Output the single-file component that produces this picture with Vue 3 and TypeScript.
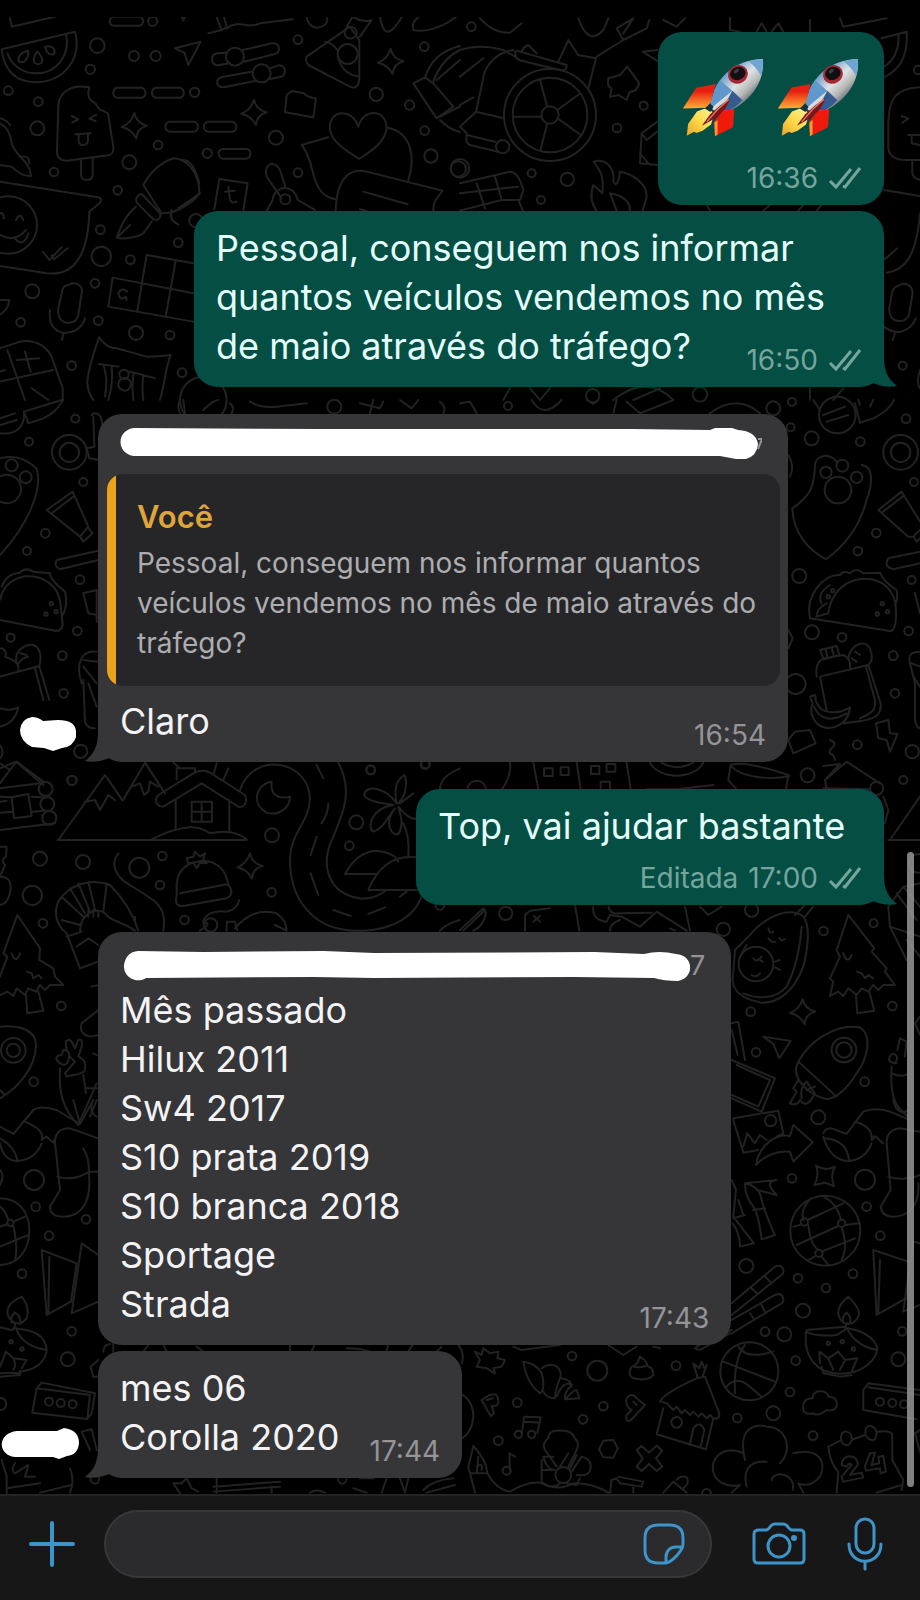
<script setup lang="ts">
interface Message {
  id: number
  from: 'me' | 'them'
  kind?: 'emoji' | 'quoted' | 'stacked' | 'named'
  lines: string[]
  time: string
  edited?: boolean
  tail?: boolean
  spaced?: boolean
  wide?: boolean
}

interface Tile {
  x: number
  y: number
  dots: number[][]
  sparks: number[][]
  paths: string[]
}

const messages: Message[] = [
  { id: 1, from: 'me', kind: 'emoji', lines: [], time: '16:36' },
  {
    id: 2, from: 'me', time: '16:50', tail: true, wide: true,
    lines: ['Pessoal, conseguem nos informar', 'quantos veículos vendemos no mês', 'de maio através do tráfego?'],
  },
  { id: 3, from: 'them', kind: 'quoted', lines: ['Claro'], time: '16:54', tail: true, spaced: true, wide: true },
  { id: 4, from: 'me', kind: 'stacked', lines: ['Top, vai ajudar bastante'], time: '17:00', edited: true, tail: true, spaced: true },
  {
    id: 5, from: 'them', kind: 'named', time: '17:43', spaced: true,
    lines: ['Mês passado', 'Hilux 2011', 'Sw4 2017', 'S10 prata 2019', 'S10 branca 2018', 'Sportage', 'Strada'],
  },
  { id: 6, from: 'them', lines: ['mes 06', 'Corolla 2020'], time: '17:44', tail: true },
]

const spark = 'M0-38Q6-8 38 0Q8 8 6 38Q-8 10-38 4Q-8-8 0-38Z'

// Wallpaper doodles, grouped in tiles drawn at three units per pixel.
const tiles: Tile[] = [
  {
    x: 0, y: 0,
    dots: [[292, 137, 22], [402, 168, 15], [467, 168, 15], [271, 208, 14], [25, 272, 13], [115, 305, 13], [112, 385, 21], [458, 64, 14], [584, 277, 14], [474, 435, 13], [388, 487, 21], [622, 460, 14], [162, 516, 13], [353, 571, 13], [301, 689, 13], [304, 769, 29], [391, 779, 13], [535, 728, 13], [588, 662, 20], [285, 850, 13], [97, 874, 21], [295, 962, 13], [62, 967, 13], [408, 999, 21], [510, 1005, 13], [215, 1097, 13], [546, 1118, 13], [894, 119, 13], [1273, 140, 13], [1129, 283, 20], [1229, 315, 14], [1274, 392, 13], [828, 413, 21], [1293, 468, 20], [894, 518, 13], [856, 598, 15], [1375, 507, 23], [705, 170, 27], [785, 220, 27], [1052, 98, 18], [1043, 162, 30], [25, 675, 86], [372, 1123, 14], [374, 1153, 19], [610, 1200, 70]],
    sparks: [[403, 377], [762, 337], [1172, 184]],
    paths: [
      'M30 55L35 80L165 50', 'M5 148L225 95C245 170 200 240 115 247C65 248 15 230 5 148M198 102C212 165 170 222 105 220C65 218 35 195 22 160',
      'M56 185C52 170 65 155 85 152C86 175 75 192 56 185M112 155C132 175 130 190 115 193C97 192 98 172 112 155M135 140C160 135 168 150 162 162C148 168 138 155 135 140',
      'M268 262C262 280 265 298 280 306C295 312 290 330 308 332L324 340L340 440C342 460 335 464 325 466L200 482C180 482 170 470 171 455L175 320C175 280 210 250 268 262M243 480V525C245 545 275 545 278 525V475',
      'M215 348L235 358L217 368M288 345L268 356L287 363M226 403L272 400M236 405V425C240 440 262 438 264 422V402',
      'M340 50H420C435 58 430 76 418 77H340C326 75 326 55 340 50M352 263H425C440 268 440 290 425 293H352C336 290 336 267 352 263M468 263H540C555 268 555 290 540 293H468C452 290 452 267 468 263M508 365H582C598 370 598 392 582 395H508C492 390 492 370 508 365M624 365H697C713 370 713 392 697 395H624C608 390 608 370 624 365M668 447H740C755 450 755 473 740 476H668C652 472 652 450 668 447',
      'M525 145L602 125L565 195L553 158ZM545 50L550 62L556 50',
      'M680 158L650 160C630 165 632 195 655 196L690 190M728 150L815 130C840 128 845 155 825 162L732 185M755 215L670 230C645 235 645 262 672 262L765 243M810 205L835 196C855 194 862 220 845 230L806 238',
      'M625 100L665 90L650 52M668 88L680 82L672 50M680 85C720 55 740 90 780 70L878 58M920 52C930 100 985 85 982 55M1140 50C1150 110 1170 110 1205 52M1240 90C1230 60 1270 40 1275 45M1240 90C1290 100 1350 70 1380 40',
      'M920 170L1050 80L1078 120V240C1075 265 1060 265 1050 260L925 195Q915 185 920 170M975 125Q1000 130 1012 150M1015 175Q1030 225 1078 230M1040 80L1058 50M1080 110L1115 60M1058 50Q1090 70 1115 60',
      'M860 285L875 273L912 280Q918 290 948 296L940 352L855 337Z',
      'M1075 380C1055 320 985 330 990 388C995 425 1035 450 1077 477C1120 450 1160 420 1160 380C1155 325 1090 325 1075 380',
      'M985 412L905 435C925 460 932 490 942 530C955 575 980 595 1005 597M1165 383C1240 400 1245 480 1225 540M1007 635C1010 520 1060 505 1100 515L1327 572C1310 600 1300 600 1300 632M1090 575L1223 613M1080 628L1100 633',
      'M1240 250L1275 232L1300 250L1360 320L1310 355ZM1275 235C1290 180 1330 150 1380 138M1300 245C1320 190 1350 165 1380 150M1310 240L1380 180M1320 350L1380 320M1320 360Q1350 390 1380 396',
      'M0 370Q30 385 35 430C45 470 90 480 93 528Q65 530 35 500L0 495M60 470Q90 465 88 490M0 355Q20 360 30 375',
      'M0 545L285 590Q310 592 300 608L268 635C265 760 225 830 140 820L0 798M0 640Q10 635 12 655M48 660Q60 635 70 660M0 705Q45 730 78 690M45 715Q70 745 85 700M128 755L148 780L185 742M155 765L162 778L203 745',
      'M430 555C455 510 490 485 520 475C560 475 600 520 598 580C590 600 540 630 515 637L485 640ZM545 480Q580 475 598 550M600 580L535 625M515 630Q505 660 535 673M425 582C410 585 405 600 410 608L460 658C475 665 485 650 480 640ZM408 620C370 650 360 690 350 712C370 722 420 708 430 700L455 665M352 712L390 675',
      'M658 537L743 550L730 630M658 537L643 628M685 560L690 600Q695 612 710 605M675 575L705 572',
      'M800 530C790 495 820 475 840 510L856 560M800 530L845 595M818 600C820 560 880 545 893 600L945 630M818 600L800 632',
      'M440 765L580 790M440 765L412 932M527 782L498 945M338 833L580 880M338 833L325 920L580 965M355 880Q365 860 382 875M355 880Q360 905 378 890L380 900',
      'M205 855C225 842 250 855 245 880L235 945C230 965 215 970 200 968C180 965 172 945 175 925L187 870Q190 858 205 855M150 930C145 975 165 995 190 998C225 1000 245 985 255 955M190 1000L186 1020M0 900L28 900Q25 930 0 943',
      'M0 1045L60 1025C110 1015 150 1045 160 1085L188 1165V1200M22 1050L75 1200M0 1145L160 1110M50 1080L118 1075M75 1055L92 1115M95 1165L145 1200M0 1115L15 1110',
      'M262 1150C262 1110 285 1050 297 1012C310 1030 330 1045 350 1045L440 1070Q480 1070 512 1065C495 1110 495 1150 480 1200M262 1150Q265 1180 280 1200M297 1092L355 1100M390 1115L465 1135M310 1095Q325 1130 315 1190M335 1100Q340 1150 325 1200M400 1120Q395 1160 400 1200M430 1125Q425 1165 430 1200',
    ],
  },
  {
    x: 460, y: 0,
    dots: [[34, 80, 13], [551, 317, 12], [471, 384, 13], [322, 538, 20], [215, 520, 12], [243, 600, 12], [0, 505, 28], [1328, 1097, 12], [1375, 210, 13], [720, 1183, 22], [398, 1187, 20], [270, 345, 138], [270, 345, 112], [270, 345, 26], [128, 440, 20]],
    sparks: [],
    paths: [
      'M262 320L240 240M292 330L358 282M293 355L362 405M262 370L242 448M243 350L160 350',
      'M60 55Q100 100 150 98L185 70M355 55Q385 140 430 90L445 55M0 150Q60 130 130 150L165 170M165 155Q165 180 185 182L300 210Q320 215 320 195L190 158Q170 150 165 155M185 155Q190 140 205 135L230 160M295 185L325 120L355 165L408 175L385 265M410 170L490 120L560 85L568 60M490 120L470 85L520 55L490 100',
      'M160 150C90 160 70 220 70 235L48 335L132 355M48 335L0 380L20 400M20 405Q15 430 30 435L112 455M20 405L105 425M0 315L40 292M0 230L70 175',
      'M445 235L480 225L502 200L538 250Q530 275 510 275L500 300L475 285L450 290L455 265Q440 260 445 235',
      'M548 155L592 150M548 155L595 185M592 365L545 400L540 490L592 495M545 400L560 420L592 395M540 460L565 490',
      'M400 485C435 475 465 500 460 545C465 555 475 560 480 515C510 520 560 545 560 590L548 632M400 485C430 520 430 540 427 580L400 555Q385 600 410 632M470 632L450 580C500 590 510 610 510 632',
      'M0 550L150 515Q175 515 190 570L180 600L125 600L0 632M50 550L75 625M105 530L125 600M0 580L175 560M175 600L188 632',
      'M610 60L650 80L675 55M810 50V90L840 95M890 95L905 70L920 95M935 95L955 70L970 95M1050 60V95M1140 55L1150 80L1280 55M1265 115L1340 95C1345 165 1320 210 1272 232M1315 105C1320 145 1300 185 1272 200',
      'M1380 262C1310 265 1285 290 1285 380V440C1285 470 1310 480 1340 480H1380M1325 348L1345 356L1327 368M1345 405H1380M1355 405V430L1380 435M1357 480V520Q1360 535 1380 540M1272 570L1380 588M1380 640C1370 760 1340 810 1280 818M1272 780L1312 745',
      'M1320 855C1340 845 1362 860 1357 885L1347 945C1340 970 1285 975 1288 925L1297 875Q1302 860 1320 855M1272 980C1310 1010 1350 995 1368 955M1305 1000L1298 1020M1380 1110Q1368 1150 1380 1165',
      'M740 615L750 632M910 632L930 615M1015 632L1030 615M1070 632L1085 615M130 1200L150 1165M210 1165L240 1200L270 1165M460 1200Q560 1120 640 1200M520 1200L600 1165M1050 1165V1200M1120 1200L1150 1165',
    ],
  },
  {
    x: 0, y: 400,
    dots: [[226, 56, 12], [87, 125, 12], [208, 157, 52], [208, 157, 29], [250, 246, 12], [35, 196, 18], [77, 232, 18], [20, 267, 43], [136, 400, 13], [81, 453, 12], [240, 539, 13], [232, 693, 13], [32, 713, 12], [187, 767, 13], [191, 880, 13], [216, 1141, 14], [242, 1054, 20], [1112, 1109, 13], [154, 611, 5], [168, 635, 5], [138, 642, 5], [1003, 20, 21], [1275, 1094, 13]],
    sparks: [],
    paths: [
      'M0 100C50 105 75 80 72 35L185 0M72 35L85 70L130 55C170 35 175 20 190 0M0 55L45 40M0 75L50 60M275 45C285 35 300 40 305 60L310 95M280 50L283 140L260 145L268 175L295 180',
      'M0 175C60 160 90 190 110 205C130 270 80 380 0 465', 'M140 330L218 275L265 380L240 410ZM155 340L220 290M240 410L250 425L278 400L265 385M170 480L295 452M170 480Q160 500 180 508L295 480M250 580L290 570M250 580L265 640L290 645M290 570V665',
      'M0 600C20 500 160 510 180 600L188 675Q185 695 165 692L0 660M5 560Q20 520 60 518Q75 500 100 515L150 520Q150 540 195 575Q205 620 185 650',
      'M50 790C40 750 80 730 100 735C125 745 125 770 118 800L148 900M0 830L118 798M105 805L130 900M55 790Q70 770 85 770M60 760L80 765M0 745C20 745 20 770 15 770C40 780 60 790 55 810M0 925Q30 935 55 922Q45 970 0 980',
      'M245 850C225 790 245 750 290 755M250 840L255 965Q260 985 285 985M250 780L292 785M250 800L290 850M265 850L290 920',
      'M0 1035Q15 1060 0 1075M0 1090L30 1110L50 1085L130 1145M30 1110L0 1150M540 40Q530 20 540 0M555 40L550 0M610 30Q640 0 655 0M690 10Q705 20 695 40M750 5Q780 25 830 20L920 10M1080 10L1140 25L1150 5M1110 40L1120 0M1200 0L1235 25L1255 0M1320 5Q1340 20 1330 40',
    ],
  },
  {
    x: 460, y: 400,
    dots: [[144, 18, 12], [940, 25, 21], [996, 5, 12], [992, 82, 12], [1055, 115, 21], [1338, 56, 13], [1201, 125, 13], [1322, 157, 52], [1322, 157, 29], [1362, 246, 12], [1098, 217, 17], [1147, 197, 18], [1190, 232, 17], [1134, 270, 40], [1132, 45, 55], [1249, 399, 13], [1194, 453, 13], [1018, 528, 21], [1355, 540, 12], [1056, 697, 21], [1146, 712, 13], [1346, 693, 13], [1300, 767, 13], [1007, 852, 30], [1305, 880, 13], [1192, 1034, 13], [1357, 1055, 20], [1267, 611, 5], [1283, 635, 5], [1252, 642, 5], [1105, 590, 5], [1118, 572, 5]],
    sparks: [],
    paths: [
      'M0 10L30 5L50 40M215 0Q250 60 305 0M380 0L400 12L415 0M460 40L470 0M500 5L540 40L640 0M750 40Q830 -20 900 40M1060 0L1080 30M1185 10L1200 68L1240 55Q1290 30 1302 0M1195 0L1200 15M1230 20L1240 0M1090 45L1155 20M1100 65L1165 45M985 165Q1005 200 990 230',
      'M1065 205C1060 165 1110 155 1130 185M1205 195C1245 200 1235 260 1220 300C1200 380 1150 440 1098 478C1045 450 1000 400 997 325C1055 285 1060 260 1065 205',
      'M1255 330L1325 275L1380 365M1265 338L1328 290M1255 330L1345 410H1360L1380 390M1362 410L1370 425L1380 415M1380 455L1285 475Q1270 500 1300 508L1380 490M1365 580L1380 640',
      'M1050 655C1035 590 1090 520 1140 525M1140 525Q1150 510 1170 520Q1190 500 1210 520L1260 518Q1270 545 1310 570Q1315 600 1305 615M1050 655L1290 693C1315 695 1312 600 1295 580C1260 510 1120 520 1105 640L1070 650Q1070 625 1100 610M1085 610Q1070 580 1110 555',
      'M1080 830L1225 795L1262 910C1265 945 1245 955 1210 962L1150 970M1080 830L1100 930M1218 800L1245 900C1250 930 1235 940 1200 955M1070 830C1065 790 1080 780 1095 775L1150 765C1170 775 1172 790 1170 805M1080 750L1130 738L1138 765L1092 778ZM1097 748L1103 773M1115 743L1122 768M1165 775C1175 720 1240 710 1235 780L1225 798M1175 775L1190 785M1185 755L1200 765',
      'M1050 890L1065 885L1068 905C1085 950 1140 940 1170 922C1165 980 1100 1000 1070 970Q1045 940 1058 910ZM1062 920Q1090 980 1160 940',
      'M1380 755Q1340 755 1350 790L1365 850V960Q1370 985 1380 985M1355 790L1380 800M1360 830L1380 860',
      'M985 1020L1005 995L1050 990L1067 1030L1000 1060ZM1110 1020Q1135 1030 1115 1045Q1100 1060 1120 1065L1125 1080M1248 970L1285 960L1290 1000L1313 1002L1290 1055L1280 1020L1255 1015Z',
      'M985 690L998 715L985 745',
    ],
  },
  {
    x: 0, y: 740,
    dots: [[216, 121, 14], [137, 147, 21], [142, 192, 21], [148, 234, 21], [1112, 90, 13], [1277, 72, 13], [1069, 247, 21], [816, 286, 21], [1048, 317, 13], [120, 356, 21], [249, 366, 21], [418, 383, 30], [487, 348, 13], [480, 435, 13], [97, 466, 29], [815, 457, 13], [554, 540, 13], [129, 550, 13], [184, 798, 13], [40, 931, 37], [40, 931, 20], [101, 1025, 13], [632, 555, 20], [1320, 495, 14]],
    sparks: [[750, 378]],
    paths: [
      'M0 85L48 65L130 135M0 145L120 130M0 170L35 172M0 270L165 250M35 172L85 162L95 228L42 235ZM95 170L125 172M97 215L130 212M0 185L20 182M0 218L38 215',
      'M175 300L315 105L368 182L435 68L495 160M255 185L285 180L300 210L325 165L345 180M395 140L420 130L432 165L445 155L450 125L475 140M172 300H740M455 298Q520 265 570 262Q600 260 630 280Q700 265 740 298',
      'M475 165L580 100Q605 85 630 98L735 165C745 190 730 205 715 200L605 130L490 200C470 200 460 180 475 165M527 180V265M688 180V275M575 185H636V245H575ZM605 185V245M575 215H636M530 118V85H585V98M520 68L540 85M640 105L650 70M670 120L685 85',
      'M720 150C760 30 930 60 930 180C925 250 870 280 870 360C870 480 940 560 1040 570C1120 580 1230 560 1265 470M1015 68C1060 150 1030 220 1000 290C960 370 980 460 1080 475Q1120 480 1160 450M950 75L970 115M985 190Q985 220 965 250M950 290L932 345M932 400L955 465M1000 510L1052 528M1105 522L1155 502M1200 470L1220 455',
      'M815 125C770 130 750 190 800 218C840 230 870 200 870 170C830 180 810 160 815 125',
      'M1190 190C1160 145 1100 130 1092 165C1100 185 1150 190 1180 195C1110 205 1100 270 1122 275C1150 265 1165 230 1185 205C1150 250 1175 290 1195 282C1215 250 1200 225 1195 200C1220 230 1240 240 1248 235M1195 190C1225 160 1220 110 1212 105C1180 130 1185 160 1190 190M1200 190L1240 160M1210 250Q1230 290 1225 350',
      'M1035 402Q1080 320 1150 335Q1190 345 1195 365M1035 402H1130M1105 450Q1150 340 1250 352M1105 450H1250M1320 148Q1320 110 1380 85',
      'M0 320L20 320L18 350Q0 360 15 375L0 410Q40 410 30 460Q20 495 0 495M355 340C330 370 345 410 390 435L460 480C495 510 495 540 490 572',
      'M530 465V430C535 390 560 365 610 362C660 365 680 400 685 435M530 465C525 490 530 500 550 498L680 475Q700 465 692 445Q685 430 670 435L540 460M560 355L580 350L585 335L600 350L615 340L610 358L620 370L600 368L590 385L580 368L565 370Z',
      'M240 685L200 580C160 550 160 500 185 470C230 420 290 420 330 435C365 470 395 510 415 572M240 685L295 665M230 620L265 595L295 615M240 575C240 520 290 500 315 520C330 545 370 545 405 572M185 470L250 530M210 445L255 520M235 430L270 515M265 425L285 510M320 430L310 515M265 510V530M280 510V530M295 512V530M185 540L240 555M200 590L245 575M405 530V545',
      'M600 572Q640 545 610 550C610 520 650 510 680 515Q710 510 718 480M680 572V545H705L712 570M705 565Q760 500 830 520Q860 540 860 572L825 555M1320 572Q1340 550 1380 540',
      'M52 525L120 625L118 660L160 685L165 710L190 735L150 735L135 750L120 735L108 755L85 745L75 765L50 745L40 768L22 755L0 765M52 525L10 640L22 650L0 710M35 640Q48 675 60 640M80 695L95 700L100 715L115 705L125 715M78 765L82 820L130 812L115 755',
      'M0 860C60 855 110 870 108 920C105 980 60 1040 0 1075M0 1050L15 1065M295 810L245 850Q235 880 270 890L295 885M275 740L295 735M280 940L290 945',
      'M180 970C165 960 165 945 185 945L190 930Q215 930 205 960C200 980 185 975 180 970M200 930L197 905Q210 890 220 915L225 925L235 900Q250 895 245 920L235 950Q260 960 255 985M210 950L225 965L195 1000L200 1010C210 1005 250 1005 255 990M180 985C175 1060 190 1110 235 1155L290 1030M250 1005L258 1060M258 1045H290M275 1090Q270 1120 290 1130',
    ],
  },
  {
    x: 460, y: 740,
    dots: [[1043, 106, 21], [1330, 120, 12], [1250, 145, 20], [137, 520, 20], [790, 568, 20], [875, 510, 20], [1091, 573, 13], [1241, 550, 12], [872, 815, 13], [1297, 798, 13], [888, 937, 13], [1152, 930, 37], [1152, 930, 23], [1214, 1025, 13], [888, 672, 52], [50, 150, 28], [1375, 370, 28]],
    sparks: [[1028, 815]],
    paths: [
      'M150 68Q155 110 125 148M220 68L235 148M350 68L362 148M500 68L512 148M252 85H278V108H252ZM302 82H326V105H302ZM393 78H418V102H393ZM440 72H466V95H440ZM422 148V125H450V148M570 68C600 120 700 120 730 68M605 68Q650 95 700 68M560 148H650L760 135M805 120L812 75Q850 60 985 105L978 148M812 75C840 115 940 120 988 108M805 120L830 148',
      'M1090 78L1140 72L1095 120L1100 145M1095 120L1160 65L1260 130M1090 145L1230 148M1290 300L1380 170M1285 300H1380M1270 170L1285 210L1275 250',
      'M0 570L70 505L78 520Q70 560 40 572M10 572L75 510M195 572V525L210 512L270 505M222 528L240 545M240 528L220 545M345 495L358 572M400 500Q395 540 440 545L450 525L485 530L540 560L590 515L680 572M450 572Q450 550 480 540M675 500L690 572M445 500Q450 525 480 520L575 518M720 500L745 525L785 500M630 565L645 572',
      'M870 585C920 525 990 500 1030 530C1055 560 1040 640 1030 680C1000 760 950 790 905 788C860 780 820 760 818 720L825 630ZM1035 530L1060 500M1005 525L1040 490M1025 560C1020 640 1000 700 980 740C950 775 900 780 850 760M860 615L845 640M945 665L960 660M940 680L960 690M880 655Q890 670 905 650M900 660L908 665M875 705Q890 715 900 700M925 565Q930 585 940 575M958 595Q965 605 975 597M925 595Q935 610 945 605',
      'M1165 525L1243 625L1235 635L1280 685L1275 695L1305 735L1270 735L1255 750L1240 735L1225 755L1205 745L1190 765L1165 745L1150 768L1135 755L1110 768L1120 725L1110 715L1140 650L1130 630ZM1150 640Q1162 675 1175 645M1190 695L1205 700L1215 715L1225 705L1240 715M1188 765L1192 820L1243 812L1228 755',
      'M1380 430L1330 440L1285 500L1290 560L1340 660M1310 460L1370 540M1330 440L1380 500M1290 560L1380 590M1340 600L1380 650M815 850L835 845L855 960M815 870L833 945',
      'M910 890L992 903L958 955L940 912Z',
      'M1015 965C1050 900 1130 850 1200 862C1240 890 1220 960 1190 1000C1160 1050 1120 1085 1090 1075C1040 1060 990 1010 1015 965M1015 965L1130 1070M1015 1020L1000 1045L1010 1055L990 1090Q1010 1100 1020 1080Q1040 1110 1065 1060L1040 1025Q1020 1040 1025 1075M1040 1050L1065 1040',
      'M815 960L945 1015L905 1115L815 1075M830 975L930 1020L895 1100L815 1065',
      'M1310 970C1285 970 1280 955 1300 940Q1320 950 1305 970M1312 930L1320 895L1340 905L1335 950M1295 980C1290 1060 1300 1100 1345 1130M1295 1000Q1330 1015 1345 1000',
      'M1380 830L1365 850L1380 885',
    ],
  },
  {
    x: 0, y: 1100,
    dots: [[102, 240, 30], [107, 320, 13], [258, 358, 13], [147, 407, 13], [66, 521, 13], [215, 694, 13], [203, 778, 21], [0, 912, 19], [147, 905, 12], [182, 909, 12], [218, 913, 12], [285, 1138, 13], [1027, 1138, 13], [33, 725, 5], [66, 747, 5], [31, 369, 10]],
    sparks: [],
    paths: [
      'M0 80L40 102L100 30Q120 15 170 30L240 72L280 0M75 65Q135 90 125 120L140 110L160 128L165 115M0 130Q10 180 50 183Q105 180 125 130M0 115Q45 140 52 180M240 72L220 0M270 50L290 0M165 128Q165 85 210 85L295 115M165 128L180 270L150 320Q150 350 190 350C250 350 270 300 268 240C265 200 270 180 250 145M172 230Q220 245 268 215L295 215',
      'M0 295C50 295 88 330 88 390C88 450 55 495 0 495M0 320Q15 330 25 360M40 365L75 350M0 380L25 372M40 380Q55 440 45 480M0 440L85 405M0 210Q15 225 0 255',
      'M125 450L230 490L213 605L140 645L125 450M148 470L145 640M245 430L295 465M245 430L215 640L295 605',
      'M65 590Q90 620 80 655Q60 680 38 665C10 640 20 610 65 590M45 638Q65 650 60 672M45 638Q30 650 35 668M0 682L35 690Q45 690 45 670M45 685C90 690 140 700 140 755C130 800 90 820 0 820M50 690Q70 740 140 750M0 800L18 755L40 775L80 780L65 805M0 830L60 825V812M40 775Q50 795 40 810',
      'M110 865L125 848L285 880L275 940L262 957L97 938ZM110 865L270 885L262 957M295 780L272 800L280 830L295 830M245 995L275 988L290 1050M245 995L270 1050',
      'M45 1090Q30 1110 45 1120L85 1095L75 1130L105 1130M5 1080L20 1130V1180M210 1105Q225 1140 210 1178M20 1165L120 1150M120 1178L215 1155',
      'M520 1150L545 1150L560 1135L575 1165L595 1175M520 1150L540 1180M640 1160L840 1145M640 1175L840 1160M650 1135V1178M815 1160V1178M930 1178Q950 1165 975 1178M1080 1135L1120 1135M1145 1178L1160 1135M1200 1135L1215 1178L1225 1135M1270 1170Q1300 1140 1360 1135M1280 1178L1365 1155M1060 1165L1100 1178M310 755Q310 735 330 732M340 755V732M430 755L445 735M490 732L500 755M590 740L610 755M870 732V755M935 755L945 732M1040 745Q1080 745 1110 755M1160 755L1165 732M1225 755L1240 732M1310 755L1325 740',
    ],
  },
  {
    x: 460, y: 1100,
    dots: [[1075, 52, 21], [932, 62, 17], [996, 235, 13], [1215, 239, 30], [1220, 320, 13], [1096, 392, 105], [1033, 366, 11], [1145, 370, 11], [1077, 460, 11], [1261, 407, 13], [859, 498, 21], [1014, 535, 13], [1179, 521, 13], [1098, 564, 13], [1029, 632, 21], [915, 695, 13], [973, 703, 21], [1327, 694, 13], [1007, 782, 13], [1315, 778, 21], [868, 814, 87], [990, 876, 13], [336, 768, 13], [412, 812, 30], [648, 797, 13], [172, 908, 13], [430, 919, 13], [369, 958, 13], [650, 967, 16], [832, 954, 13], [940, 940, 21], [115, 1022, 13], [1059, 1007, 13], [1260, 905, 12], [1297, 909, 12], [1332, 913, 12], [310, 1125, 24], [740, 1180, 13], [1105, 730, 5], [1147, 725, 5], [1180, 747, 5], [175, 1003, 11], [215, 1003, 11], [140, 1112, 12]],
    sparks: [],
    paths: [
      'M820 55L955 32L970 100L950 110M820 60L850 158L895 150M850 140L862 100L885 130L900 105L920 120M888 195C900 130 950 100 990 108L1000 75L1058 127L1000 185L990 155C950 150 910 170 888 195',
      'M1090 100Q1095 85 1115 85L1160 102L1210 35Q1250 20 1290 35L1350 60M1185 65Q1240 80 1235 120L1245 108L1270 130M1090 110Q1110 180 1165 183Q1215 180 1235 130M1095 115Q1160 120 1167 180M1300 0Q1310 50 1350 30M1280 128Q1280 90 1320 85L1380 95M1280 128L1292 270L1262 320Q1265 350 1300 350C1350 350 1380 310 1375 250M1285 230Q1330 245 1380 225',
      'M1068 197Q1100 215 1125 200Q1110 225 1122 258L1095 248L1063 255Q1080 225 1068 197',
      'M855 250Q900 260 905 300Q915 340 945 405L905 418Q895 340 880 320Q855 290 855 250M880 330L915 325M855 250L950 240Q910 245 950 285L890 270M815 240L828 270L820 350L882 430L840 440Q840 400 818 370M820 355L855 345M835 300L850 345',
      'M1050 298Q1020 330 1030 360M1043 360L1150 310M1020 375L1000 380M1045 375C1050 420 1060 440 1075 450M1095 292Q1130 310 1142 355M1155 375L1195 370M1145 382Q1165 440 1145 480M1010 435L1135 378M1085 455L1185 415M1068 468L1045 480M1085 470L1105 495',
      'M815 610L945 500C965 490 975 510 968 522L815 645M815 660L945 585C970 575 975 600 965 610L815 700M875 565L890 580M915 530L935 550M870 640L880 655M905 615L915 635M710 740L815 690M705 745L720 750L810 700',
      'M1165 590Q1205 630 1195 650Q1180 680 1150 668C1120 640 1140 610 1165 590M1160 638Q1145 650 1150 668M1160 638Q1175 650 1170 668M1160 670L1155 690Q1140 700 1130 705C1060 712 1040 695 1038 695M1040 690L1155 680M1038 695C1030 770 1070 830 1160 820C1210 815 1250 780 1252 745C1245 710 1200 690 1160 685Q1190 740 1250 750M1080 790L1078 755L1105 775L1135 755L1155 780L1192 775L1175 815M1105 775L1120 810M1155 780L1140 810M1085 800L1090 820L1140 830L1175 825',
      'M1240 450L1345 485M1240 455L1250 645L1338 595M1260 480L1255 635M1380 430L1360 425L1330 635L1380 615',
      'M790 785L945 845M835 740Q860 780 940 755M855 735Q820 780 825 880M800 860Q830 825 870 860L905 890M1210 870L1225 850L1380 870M1210 870V930L1370 958M1225 862L1380 885M1380 990L1365 1000L1380 1055',
      'M45 755L65 765L70 745L90 760L115 755L112 775L135 780L125 800L100 805L105 820L80 805L50 800L60 780ZM160 740L185 750L300 735M445 735L490 765L530 740M580 740L600 745',
      'M190 785Q230 790 245 820C255 850 250 875 240 880Q200 850 190 785M245 805C280 780 310 805 300 835Q285 870 285 895Q260 895 250 875M305 835Q335 840 335 860M290 890Q310 840 335 855Q310 880 315 898Q340 870 350 870M318 898L358 895L350 870',
      'M540 770Q530 800 515 800Q500 825 520 835Q565 845 580 825Q580 800 560 798Q565 785 540 770M520 800Q540 805 555 798',
      'M600 905Q610 880 710 835L735 830L778 940Q780 960 760 955L750 945L740 955L725 940L715 950L700 935L690 945L675 930L665 940L650 920L640 930L620 910ZM610 925L590 1003L738 1048L760 955M690 1035L700 985Q720 960 733 990L722 1040M712 830L700 790L718 805L725 785L735 810L740 795L728 830',
      'M65 900L90 885Q115 875 115 905Q115 920 95 918L102 940L92 948ZM80 900L98 895M500 895Q515 875 530 895L555 915L510 963Q495 965 500 945L515 930Q495 920 500 895M520 905L530 915',
      'M185 1000L193 950L242 952L232 1000M192 965L240 968M150 1112L148 1060L165 1070M25 1100L40 1038Q80 1080 82 1120M82 1120Q110 1170 150 1175Q210 1140 250 1150M35 1120L82 1120M50 1100Q70 1085 65 1110M25 1100L45 1178M55 1070L50 1120',
      'M1030 930Q1025 895 1058 895Q1060 870 1090 875Q1105 880 1105 890Q1135 890 1130 920Q1120 935 1100 930Q1075 950 1060 940Q1035 945 1030 930M430 1022L460 1020L473 1045L460 1073L430 1072L417 1048Z',
      'M255 1050Q245 1030 265 1015Q265 990 300 992Q335 990 345 1015Q360 1030 350 1050M255 1050L290 1100M285 1110Q260 1110 250 1070L280 1070M245 1080V1150Q280 1170 300 1150M330 1105L350 1065M335 1115L365 1070Q400 1080 390 1110Q385 1130 350 1125M320 1150L350 1155L360 1135M250 1150Q290 1175 340 1150Q400 1150 445 1178M250 1110H275M300 1100L325 1060M350 1050L325 1100',
      'M530 1050L545 1038L567 1058L590 1037L607 1052L588 1075L607 1100L590 1113L567 1092L545 1113L530 1100L548 1075Z',
      'M855 1080C830 980 890 970 920 980C980 980 1000 1050 960 1090M1000 1060C1080 1040 1100 1090 1080 1130Q1050 1165 1015 1150L1030 1178M850 1060C790 1030 740 1080 765 1130Q790 1165 840 1155L815 1178M920 1085C860 1080 850 1120 860 1160M935 1140C940 1110 1010 1120 998 1170',
      'M1105 1040L1145 1020M1175 1020L1215 1005M1250 995Q1295 990 1297 1005V1080M1105 1040Q1110 1090 1135 1115L1130 1178M1297 1080L1330 1140L1325 1170M1250 1178L1325 1155M1160 995C1185 1000 1175 1040 1158 1035C1135 1030 1140 990 1160 995M1232 978C1260 985 1250 1025 1235 1020C1210 1015 1210 975 1232 978',
      'M1145 1095C1145 1060 1195 1060 1193 1095L1170 1125L1205 1118L1210 1133L1150 1145L1145 1130L1175 1095Q1170 1085 1160 1100ZM1230 1060L1245 1058L1235 1095L1258 1090L1255 1070L1270 1068L1278 1115L1262 1120L1260 1105L1218 1112L1215 1098Z',
      'M450 1178L455 1140L470 1135L480 1150L545 1160L550 1145L475 1130M520 1162V1178M610 1178L640 1145L680 1178M650 1140Q660 1125 680 1132Q690 1150 670 1165M0 880Q40 900 40 950Q35 1000 5 1015M-5 735Q15 760 5 790',
    ],
  },
]
</script>

<template>
  <div class="app">
    <main class="chat">
      <svg class="wallpaper" viewBox="0 0 920 1494" preserveAspectRatio="xMidYMin slice" aria-hidden="true">
        <g v-for="(t, i) in tiles" :key="i" :transform="`translate(${t.x} ${t.y}) scale(.3333)`">
          <path v-for="(d, k) in t.paths" :key="'p' + k" :d="d" />
          <path v-for="(s, k) in t.sparks" :key="'s' + k" :d="spark" :transform="`translate(${s[0]} ${s[1]})`" />
          <circle v-for="(c, k) in t.dots" :key="'c' + k" :cx="c[0]" :cy="c[1]" :r="c[2]" />
        </g>
      </svg>

      <article
        v-for="m in messages"
        :key="m.id"
        class="bubble"
        :class="[m.from, m.kind, { spaced: m.spaced, wide: m.wide }]"
      >
        <div v-if="m.kind === 'emoji'" class="rockets">
          <svg v-for="n in 2" :key="n" viewBox="62 78 250 244" role="img" aria-label="Foguete">
            <defs>
              <linearGradient :id="'hull' + n" x1="0" y1="0" x2="1" y2="1">
                <stop offset=".25" stop-color="#5b8fc4" />
                <stop offset=".5" stop-color="#dfe3e4" />
                <stop offset=".65" stop-color="#b5b7b5" />
                <stop offset=".8" stop-color="#4c5a68" />
              </linearGradient>
              <linearGradient :id="'fin' + n" x1="0" y1="0" x2="0" y2="1">
                <stop offset=".3" stop-color="#e8200f" />
                <stop offset="1" stop-color="#ffad35" />
              </linearGradient>
              <linearGradient :id="'fire' + n" x1="1" y1="0" x2="0" y2="1">
                <stop offset="0" stop-color="#fff3a0" />
                <stop offset=".5" stop-color="#ffdb4d" />
                <stop offset="1" stop-color="#e9a426" />
              </linearGradient>
            </defs>
            <path d="M166 160L107 172L66 235L140 233L153 214Z" :fill="`url(#fin${n})`" />
            <path d="M223 238L219 292L164 320L162 275L198 228Z" fill="#f01a0c" />
            <path d="M162 278L164 320L172 314V270Z" fill="#f19a35" />
            <path d="M109 244L140 233L162 250L152 284L126 303L108 310L100 306L78 318L82 282Z" :fill="`url(#fire${n})`" />
            <path d="M310 84C314 118 303 160 280 186C260 210 236 230 211 240L160 241L149 228L163 178C186 125 240 85 310 84Z" :fill="`url(#hull${n})`" />
            <path d="M310 84C312 104 309 122 305 135Q287 106 267 92Q287 84 310 84Z" fill="#6fa5d4" />
            <path d="M180 149L217 181L158 230L149 226L163 178Z" fill="#6198cc" />
            <path d="M217 181L248 210Q230 230 211 240L185 240Z" fill="#365b91" />
            <path d="M149 220L160 230L150 246L133 235Z" fill="#16323c" />
            <path d="M212 202L180 226L150 252L124 288L166 264L196 236Z" fill="#7d1519" />
            <path d="M207 207L171 239L139 276" fill="none" stroke="#e37a6f" stroke-width="4" />
            <ellipse cx="234" cy="131" rx="31" ry="28" fill="#a52835" transform="rotate(-30 234 131)" />
            <ellipse cx="234" cy="128" rx="24" ry="20" fill="#120f12" transform="rotate(-20 234 128)" />
            <ellipse cx="229" cy="121" rx="9" ry="5" fill="#403c40" transform="rotate(-35 229 121)" />
          </svg>
        </div>

        <header v-if="m.kind === 'quoted' || m.kind === 'named'" class="sender">
          <svg v-if="m.kind === 'quoted'" class="mask-long" viewBox="0 0 642 34" aria-hidden="true">
            <path d="M14 1L200 2H510L590 3L595 1H612L618 3Q636 4 638 17Q637 29 626 32H616L600 29H14C-4 27-4 3 14 1Z" />
            <path class="remnant" d="M638 12H642L638 22" />
          </svg>
          <template v-else>
            <svg class="mask-short" viewBox="0 0 566 34" aria-hidden="true">
              <path d="M14 2L80 3L200 2L250 4L470 3L520 5Q535 1 552 5C570 6 571 29 554 32Q540 32 530 29L450 28L250 29L190 28L22 29C14 35-1 29 0 16Q2 3 14 2Z" />
            </svg>
            <span>7</span>
          </template>
        </header>

        <blockquote v-if="m.kind === 'quoted'" class="quote">
          <cite>Você</cite>
          <p>Pessoal, conseguem nos informar quantos veículos vendemos no mês de maio através do tráfego?</p>
        </blockquote>

        <div class="content">
          <p v-if="m.lines.length" class="text">
            <span v-for="line in m.lines" :key="line">{{ line }}</span>
          </p>
          <footer class="meta">
            <span v-if="m.edited">Editada</span>
            <time>{{ m.time }}</time>
            <svg v-if="m.from === 'me'" class="checks" viewBox="0 0 34 24" role="img" aria-label="Entregue">
              <path d="M2 15L8 21L23 3M15 20L17 21L32 2" />
            </svg>
          </footer>
        </div>

        <svg v-if="m.tail" class="tail" viewBox="0 0 26 30" aria-hidden="true">
          <path d="M0 0H13C13 14 17 22 26 29C18 31 9 29 2 26L0 27Z" />
        </svg>
        <svg v-if="m.id === 3" class="avatar first" viewBox="0 0 56 34" aria-hidden="true">
          <path d="M12 0Q18 0 23 4L38 3Q55 3 56 14V20Q53 30 42 31L33 34L24 31L12 30Q0 24 0 13Q1 2 12 0Z" />
        </svg>
        <svg v-if="m.id === 6" class="avatar second" viewBox="0 0 78 32" aria-hidden="true">
          <path d="M16 3H56L63 0Q78 2 78 15Q77 27 66 28L58 31L52 29H14C-4 27-4 5 16 3Z" />
        </svg>
      </article>

      <div class="scroll-thumb"></div>
    </main>

    <form class="composer" @submit.prevent>
      <button type="button" class="plus" aria-label="Anexar">
        <svg viewBox="0 0 48 48"><path d="M24 3V45M3 24H45" /></svg>
      </button>
      <div class="field">
        <input type="text" aria-label="Mensagem" />
        <button type="button" aria-label="Figurinhas">
          <svg viewBox="0 0 44 44">
            <path d="M23 41H16C7 41 3 36 3 28V16C3 7 8 3 16 3H28C37 3 41 8 41 16V22C41 28 30 41 23 41ZM24 41V35C24 29 28 25 34 25H40" />
          </svg>
        </button>
      </div>
      <button type="button" class="camera" aria-label="Câmera">
        <svg viewBox="0 0 54 44">
          <path d="M7 8H14Q16 8 18 5Q20 2 23 2H31Q34 2 36 5Q38 8 40 8H48Q52 8 52 12V37Q52 41 48 41H6Q2 41 2 37V12Q2 8 7 8Z" />
          <circle cx="27" cy="24" r="11" />
          <circle class="dot" cx="42" cy="16" r="3" />
        </svg>
      </button>
      <button type="button" class="mic" aria-label="Gravar áudio">
        <svg viewBox="0 0 38 54">
          <rect x="10" y="2" width="18" height="34" rx="9" />
          <path d="M3 27C3 50 35 50 35 27M19 44V52" />
        </svg>
      </button>
    </form>
  </div>
</template>

<style>
body {
  margin: 0;
  background: #000;
}
</style>

<style scoped>
.app {
  display: flex;
  flex-direction: column;
  min-height: 100vh;
  background: #000;
  font-family: Inter, 'Liberation Sans', sans-serif;
  font-size: 36px;
  line-height: 49px;
}

p,
blockquote {
  margin: 0;
}

.chat {
  position: relative;
  z-index: 0;
  flex: 1;
  display: flex;
  flex-direction: column;
  gap: 6px;
  padding: 32px 36px 16px 98px;
  overflow: hidden;
}

.wallpaper {
  position: absolute;
  z-index: -1;
  inset: 0;
  width: 100%;
  height: 100%;
  clip-path: inset(17px 0 0 0);
  fill: none;
  stroke: #222;
  stroke-width: 6;
  stroke-linecap: round;
  stroke-linejoin: round;
}

.bubble {
  position: relative;
  box-sizing: border-box;
  max-width: 88%;
  padding: 13px 22px 11px;
  border-radius: 24px;
}

.wide {
  width: 690px;
}

.wide .text {
  flex: 1 1 0;
  min-width: 0;
}

.spaced {
  margin-top: 21px;
}

.me {
  align-self: flex-end;
  background: #044e44;
  color: #e4fffb;
  fill: #044e44;
}

.them {
  align-self: flex-start;
  background: #363638;
  color: #f3f3f5;
  fill: #363638;
}

.content {
  display: flex;
  align-items: flex-end;
  justify-content: space-between;
  gap: 30px;
}

.text {
  padding-bottom: 5px;
  white-space: nowrap;
}

.text span {
  display: block;
}

.meta {
  display: flex;
  flex: none;
  align-items: center;
  gap: 10px;
  margin-left: auto;
  font-size: 28px;
  line-height: 32px;
  color: #949499;
}

.me .meta {
  color: #76a59e;
}

.checks {
  width: 34px;
  height: 24px;
  fill: none;
  stroke: currentColor;
  stroke-width: 3;
}

.stacked {
  width: 468px;
}

.stacked .content {
  flex-direction: column;
  align-items: flex-start;
  gap: 6px;
}

.rockets {
  display: flex;
  gap: 12px;
  padding: 12px 3px 25px 1px;
}

.rockets svg {
  width: 83px;
  height: 80px;
}

.sender {
  display: flex;
  align-items: center;
  height: 41px;
  font-size: 27px;
  color: #949499;
}

.quoted .sender {
  align-items: flex-start;
  height: 40px;
}

.sender svg {
  height: 34px;
  fill: #fff;
}

.mask-long {
  width: 642px;
}

.mask-short {
  width: 566px;
  margin-left: 4px;
}

.named .sender span {
  padding-right: 4px;
}

.remnant {
  fill: none;
  stroke: #949499;
  stroke-width: 2;
}

.quote {
  margin: 7px -14px 11px -13px;
  padding: 23px 8px 23px 30px;
  border-radius: 16px;
  background: linear-gradient(to right, #eaa31a 9px, #262628 9px);
  font-size: 28px;
  line-height: 40px;
  color: #adadb1;
}

.quote cite {
  display: block;
  margin-bottom: 6px;
  font-size: 31px;
  font-style: normal;
  font-weight: 600;
  color: #dfa53a;
}

.tail {
  position: absolute;
  right: -13px;
  bottom: 0;
  width: 26px;
  height: 30px;
}

.them .tail {
  right: auto;
  left: -13px;
  transform: scaleX(-1);
}

.avatar {
  position: absolute;
  fill: #fff;
}

.first {
  left: -78px;
  bottom: 11px;
  width: 56px;
  height: 34px;
}

.second {
  left: -97px;
  bottom: 18px;
  width: 78px;
  height: 32px;
}

.scroll-thumb {
  position: absolute;
  top: 57%;
  right: 6px;
  bottom: 7px;
  width: 7px;
  border-radius: 4px;
  background: rgba(150, 150, 150, 0.85);
}

.composer {
  display: flex;
  align-items: center;
  box-sizing: border-box;
  height: 106px;
  padding: 0 36px 8px 28px;
  border-top: 2px solid #242424;
  background: #171717;
}

.composer svg {
  display: block;
  width: 100%;
  fill: none;
  stroke: #3d94c9;
  stroke-width: 3;
  stroke-linecap: round;
  stroke-linejoin: round;
}

.composer button {
  flex: none;
  padding: 0;
  border: 0;
  background: none;
}

.composer .plus {
  width: 48px;
}

.composer .plus svg {
  stroke-width: 4;
}

.field {
  flex: 1;
  display: flex;
  align-items: center;
  box-sizing: border-box;
  min-width: 0;
  height: 68px;
  margin: 0 40px 0 28px;
  padding: 0 24px 0 30px;
  border: 2px solid #38383a;
  border-radius: 34px;
  background: #2b2b2d;
}

.field input {
  flex: 1;
  width: 100%;
  min-width: 0;
  border: 0;
  outline: 0;
  background: none;
  font: inherit;
  color: #f3f3f5;
}

.field button {
  width: 44px;
}

.composer .camera {
  width: 54px;
}

.composer .mic {
  width: 38px;
  margin-left: 40px;
}

.composer .dot {
  fill: #3d94c9;
  stroke: none;
}
</style>
